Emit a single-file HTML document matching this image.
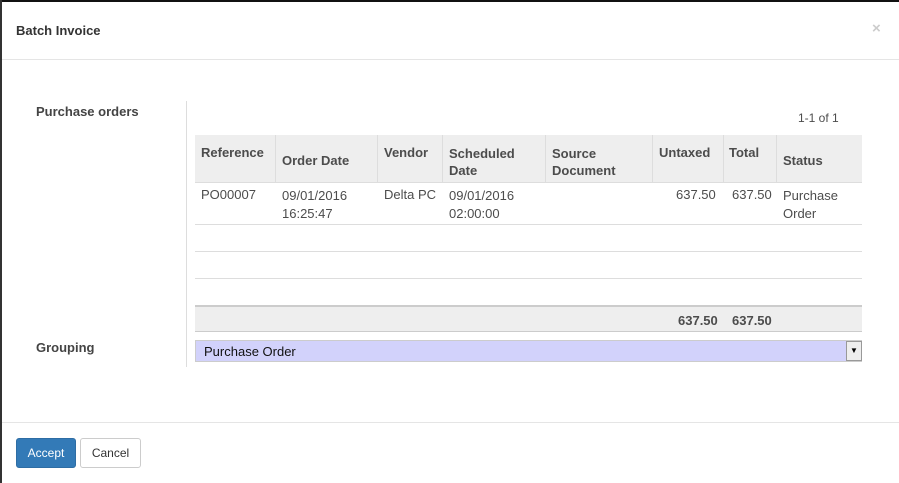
<!DOCTYPE html><html><head><style>
body{margin:0;width:899px;height:483px;background:#fff;font-family:"Liberation Sans",sans-serif;font-size:13px;color:#4c4c4c;position:relative;overflow:hidden}
.a{position:absolute}
b{font-weight:bold}
.vl{position:absolute;top:135px;height:47px;width:1px;background:#ddd}
</style></head><body>
<div class="a" style="left:0;top:0;width:899px;height:2px;background:#111"></div>
<div class="a" style="left:0;top:0;width:2px;height:483px;background:#333"></div>
<div class="a" style="left:16px;top:23px;font-weight:bold;color:#333">Batch Invoice</div>
<div class="a" style="left:872px;top:20px;color:#ccc;font-size:15px;font-weight:bold">×</div>
<div class="a" style="left:2px;top:59px;width:897px;height:1px;background:#e5e5e5"></div>
<div class="a" style="left:36px;top:104px;font-weight:bold;color:#444">Purchase orders</div>
<div class="a" style="left:36px;top:340px;font-weight:bold;color:#444">Grouping</div>
<div class="a" style="left:186px;top:101px;width:1px;height:266px;background:#ddd"></div>
<div class="a" style="left:798px;top:111px;font-size:12px">1-1 of 1</div>
<div class="a" style="left:195px;top:135px;width:667px;height:47px;background:#eee;border-bottom:1px solid #ddd"></div>
<div class="vl" style="left:275px"></div><div class="vl" style="left:377px"></div><div class="vl" style="left:442px"></div><div class="vl" style="left:545px"></div><div class="vl" style="left:652px"></div><div class="vl" style="left:723px"></div><div class="vl" style="left:776px"></div>
<b class="a" style="left:201px;top:145px">Reference</b>
<b class="a" style="left:282px;top:153px">Order Date</b>
<b class="a" style="left:384px;top:145px">Vendor</b>
<b class="a" style="left:449px;top:145px;line-height:17px">Scheduled<br>Date</b>
<b class="a" style="left:552px;top:145px;line-height:17px">Source<br>Document</b>
<b class="a" style="left:659px;top:145px">Untaxed</b>
<b class="a" style="left:729px;top:145px">Total</b>
<b class="a" style="left:783px;top:153px">Status</b>
<div class="a" style="left:201px;top:187px">PO00007</div>
<div class="a" style="left:282px;top:187px;line-height:18px">09/01/2016<br>16:25:47</div>
<div class="a" style="left:384px;top:187px">Delta PC</div>
<div class="a" style="left:449px;top:187px;line-height:18px">09/01/2016<br>02:00:00</div>
<div class="a" style="left:676px;top:187px">637.50</div>
<div class="a" style="left:732px;top:187px">637.50</div>
<div class="a" style="left:783px;top:187px;line-height:18px">Purchase<br>Order</div>
<div class="a" style="left:195px;top:224px;width:667px;height:1px;background:#ddd"></div>
<div class="a" style="left:195px;top:251px;width:667px;height:1px;background:#ddd"></div>
<div class="a" style="left:195px;top:278px;width:667px;height:1px;background:#ddd"></div>
<div class="a" style="left:195px;top:305px;width:667px;height:24px;background:#eee;border-top:2px solid #ccc;border-bottom:1px solid #ccc"></div>
<b class="a" style="left:678px;top:313px">637.50</b>
<b class="a" style="left:732px;top:313px">637.50</b>
<div class="a" style="left:195px;top:340px;width:665px;height:20px;background:#d2d2fb;border:1px solid #ccc;font-size:13px;line-height:22px;color:#111"><span style="padding-left:8px">Purchase Order</span></div>
<div class="a" style="left:846px;top:341px;width:14px;height:18px;background:#eee;border:1px solid #999;font-size:8px;text-align:center;line-height:18px;color:#000">▼</div>
<div class="a" style="left:2px;top:422px;width:897px;height:1px;background:#e5e5e5"></div>
<div class="a" style="left:16px;top:438px;width:58px;height:28px;background:#337ab7;border:1px solid #2e6da4;border-radius:3px;color:#fff;font-size:12px;text-align:center;line-height:28px">Accept</div>
<div class="a" style="left:80px;top:438px;width:59px;height:28px;background:#fff;border:1px solid #ccc;border-radius:3px;color:#333;font-size:12px;text-align:center;line-height:28px">Cancel</div>
</body></html>
